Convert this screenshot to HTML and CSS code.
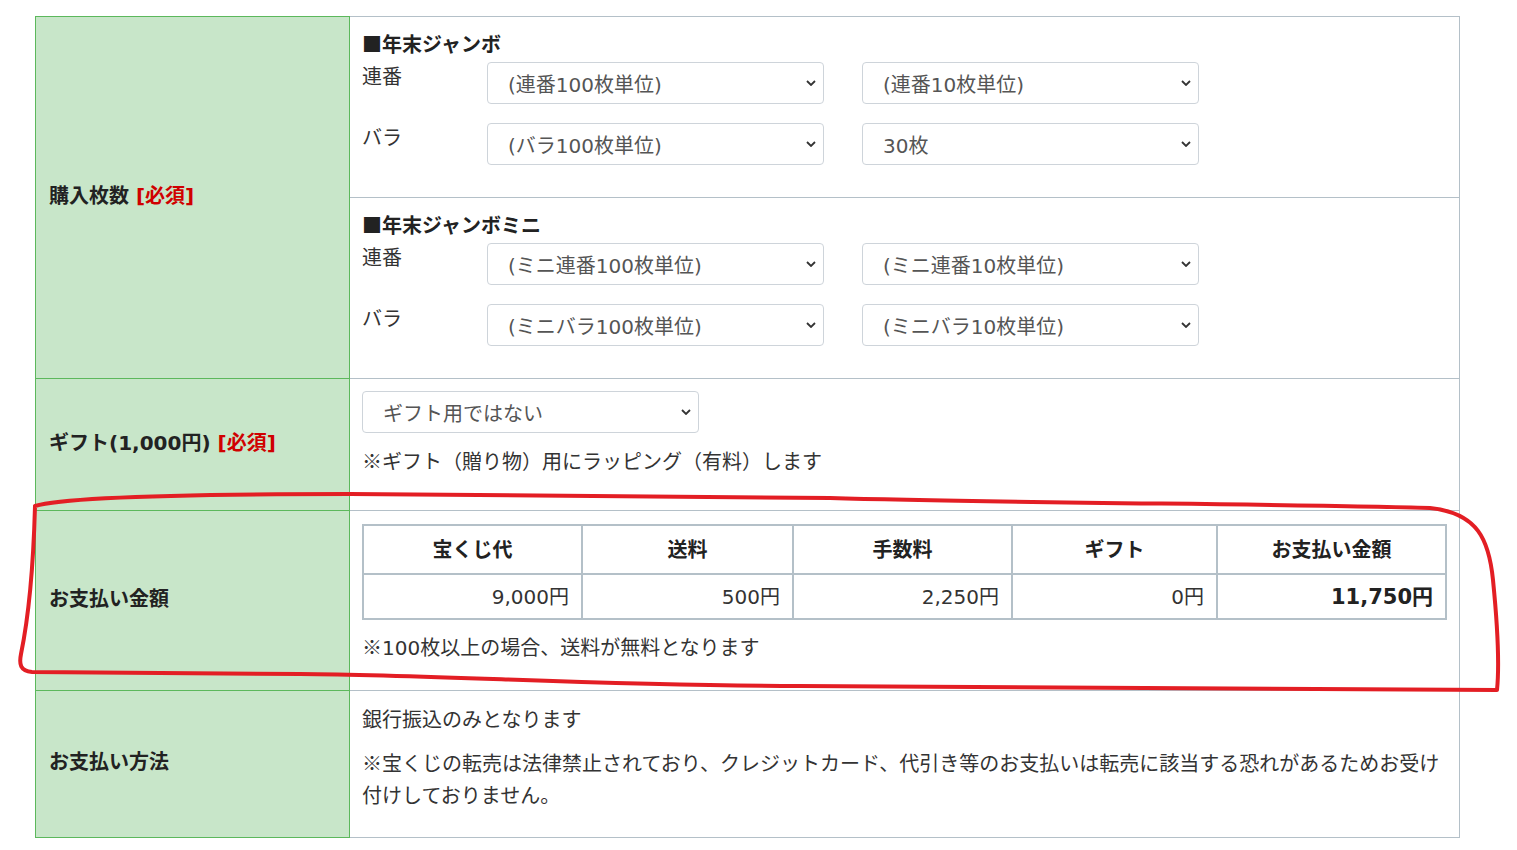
FILE: index.html
```html
<!DOCTYPE html>
<html lang="ja">
<head>
<meta charset="utf-8">
<title>購入フォーム</title>
<link rel="stylesheet" href="styles.css">
</head>
<body>
<div class="page">
  <table class="form">
    <colgroup><col class="col-head"><col class="col-body"></colgroup>
    <tr>
      <th>購入枚数 <span class="req">[必須]</span></th>
      <td class="flush">
        <div class="sub">
          <p class="sub-title"><span class="cjk">■</span>年末ジャンボ</p>
          <div class="pick-grid">
            <span class="pick-label">連番</span>
            <span class="select-wrap"><select class="sel"><option>(連番100枚単位)</option></select><svg class="chev" viewBox="0 0 10 6"><path d="M1 1l4 4 4-4"/></svg></span>
            <span class="select-wrap"><select class="sel"><option>(連番10枚単位)</option></select><svg class="chev" viewBox="0 0 10 6"><path d="M1 1l4 4 4-4"/></svg></span>
            <span class="pick-label">バラ</span>
            <span class="select-wrap"><select class="sel"><option>(バラ100枚単位)</option></select><svg class="chev" viewBox="0 0 10 6"><path d="M1 1l4 4 4-4"/></svg></span>
            <span class="select-wrap"><select class="sel"><option>30枚</option></select><svg class="chev" viewBox="0 0 10 6"><path d="M1 1l4 4 4-4"/></svg></span>
          </div>
        </div>
        <div class="sub sub-last">
          <p class="sub-title"><span class="cjk">■</span>年末ジャンボミニ</p>
          <div class="pick-grid">
            <span class="pick-label">連番</span>
            <span class="select-wrap"><select class="sel"><option>(ミニ連番100枚単位)</option></select><svg class="chev" viewBox="0 0 10 6"><path d="M1 1l4 4 4-4"/></svg></span>
            <span class="select-wrap"><select class="sel"><option>(ミニ連番10枚単位)</option></select><svg class="chev" viewBox="0 0 10 6"><path d="M1 1l4 4 4-4"/></svg></span>
            <span class="pick-label">バラ</span>
            <span class="select-wrap"><select class="sel"><option>(ミニバラ100枚単位)</option></select><svg class="chev" viewBox="0 0 10 6"><path d="M1 1l4 4 4-4"/></svg></span>
            <span class="select-wrap"><select class="sel"><option>(ミニバラ10枚単位)</option></select><svg class="chev" viewBox="0 0 10 6"><path d="M1 1l4 4 4-4"/></svg></span>
          </div>
        </div>
      </td>
    </tr>
    <tr>
      <th>ギフト(1,000円) <span class="req">[必須]</span></th>
      <td class="gift-cell">
        <span class="select-wrap"><select class="sel"><option>ギフト用ではない</option></select><svg class="chev" viewBox="0 0 10 6"><path d="M1 1l4 4 4-4"/></svg></span>
        <p class="note cjk-text gift-note">※ギフト（贈り物）用にラッピング（有料）します</p>
      </td>
    </tr>
    <tr>
      <th>お支払い金額</th>
      <td class="fee-cell">
        <table class="fee">
          <colgroup><col class="f1"><col class="f2"><col class="f3"><col class="f4"><col class="f5"></colgroup>
          <tr><th>宝くじ代</th><th>送料</th><th>手数料</th><th>ギフト</th><th>お支払い金額</th></tr>
          <tr><td>9,000円</td><td>500円</td><td>2,250円</td><td>0円</td><td class="total">11,750円</td></tr>
        </table>
        <p class="note fee-note"><span class="cjk">※</span>100枚以上の場合、送料が無料となります</p>
      </td>
    </tr>
    <tr>
      <th>お支払い方法</th>
      <td class="pay-cell">
        <p class="note cjk-text">銀行振込のみとなります</p>
        <p class="note cjk-text pay-note">※宝くじの転売は法律禁止されており、クレジットカード、代引き等のお支払いは転売に該当する恐れがあるためお受け付けしておりません。</p>
      </td>
    </tr>
  </table>
  <svg class="scribble" viewBox="0 0 1517 850" width="1517" height="850"><path d="M35,506 C60,498 150,494 350,494 L830,498 C1000,503 1300,504 1430,508 C1478,513 1489,540 1493,580 C1497,620 1500,660 1497,690 C1300,690 1000,686 800,686 C600,686 450,675 300,674 L32,672 C20,671 19,664 21,654 C28,620 33,580 35,506"/></svg>
</div>
</body>
</html>
```
FILE: styles.css
```css
html, body {
  margin: 0;
  padding: 0;
  background: #fff;
}
body {
  font-family: "DejaVu Sans", "Noto Sans CJK JP", sans-serif;
  font-size: 20px;
  line-height: 32px;
  color: #333;
}
.cjk {
  font-family: "Noto Sans CJK JP", sans-serif;
  line-height: 1;
}
.cjk-text {
  font-family: "Noto Sans CJK JP", sans-serif;
}
.page {
  position: relative;
  width: 1517px;
  height: 850px;
  padding: 16px 0 0 35px;
  box-sizing: border-box;
}
.form {
  border-collapse: collapse;
  table-layout: fixed;
  width: 1425px;
}
.col-head { width: 314px; }
.form > tbody > tr > th {
  background: #c8e6c9;
  border: 1px solid #5cb85c;
  text-align: left;
  padding: 0 13px 4px;
  font-weight: bold;
  color: #222;
  vertical-align: middle;
}
.form > tbody > tr > td {
  border: 1px solid #b4c0c8;
  padding: 11px 12px;
  vertical-align: top;
}
.req {
  color: #d00000;
}
.form > tbody > tr > td.flush {
  padding: 0;
}
.sub {
  padding: 12px 12px 32px;
  border-bottom: 1px solid #b4c0c8;
}
.sub-last {
  border-bottom: none;
}
.sub-title {
  margin: 0;
  height: 32px;
  font-weight: bold;
  color: #222;
}
.pick-grid {
  display: grid;
  grid-template-columns: 87px 337px 337px;
  column-gap: 38px;
  row-gap: 19px;
  margin-top: 1px;
}
.pick-label {
  line-height: 30px;
}
.select-wrap {
  position: relative;
  display: block;
  width: 337px;
  height: 42px;
}
.sel {
  appearance: none;
  -webkit-appearance: none;
  width: 100%;
  height: 42px;
  box-sizing: border-box;
  border: 1px solid #ced4da;
  border-radius: 4px;
  background: #fff;
  padding: 4px 40px 0 20px;
  font-family: inherit;
  font-size: 20px;
  color: #555;
}
.chev {
  position: absolute;
  right: 8px;
  top: 18px;
  width: 10px;
  height: 6px;
  fill: none;
  stroke: #333;
  stroke-width: 1.8;
  pointer-events: none;
}
.note {
  margin: 0;
}
.form > tbody > tr > td.gift-cell {
  padding: 12px 12px 33px;
}
.gift-note {
  margin-top: 12px;
  height: 32px;
}
.form > tbody > tr > td.fee-cell {
  padding: 13px 14px 26px 12px;
}
.fee {
  border-collapse: collapse;
  table-layout: fixed;
  width: 1083px;
}
.f1 { width: 219px; }
.f2 { width: 211px; }
.f3 { width: 219px; }
.f4 { width: 205px; }
.f5 { width: 229px; }
.fee th, .fee td {
  border: 2px solid #b4c0c8;
}
.fee th {
  padding: 8px 10px 7px;
  font-weight: bold;
  text-align: center;
  color: #222;
}
.fee td {
  padding: 6px 12px 5px;
  text-align: right;
}
.fee td.total {
  font-weight: bold;
  font-size: 21px;
  color: #222;
}
.fee-note {
  margin-top: 12px;
  height: 32px;
}
.form > tbody > tr > td.pay-cell {
  padding: 12px 12px 26px;
}
.pay-note {
  margin-top: 12px;
}
.scribble {
  position: absolute;
  left: 0;
  top: 0;
  pointer-events: none;
  fill: none;
  stroke: #e31e24;
  stroke-width: 4;
  stroke-linejoin: round;
  stroke-linecap: round;
}
```
